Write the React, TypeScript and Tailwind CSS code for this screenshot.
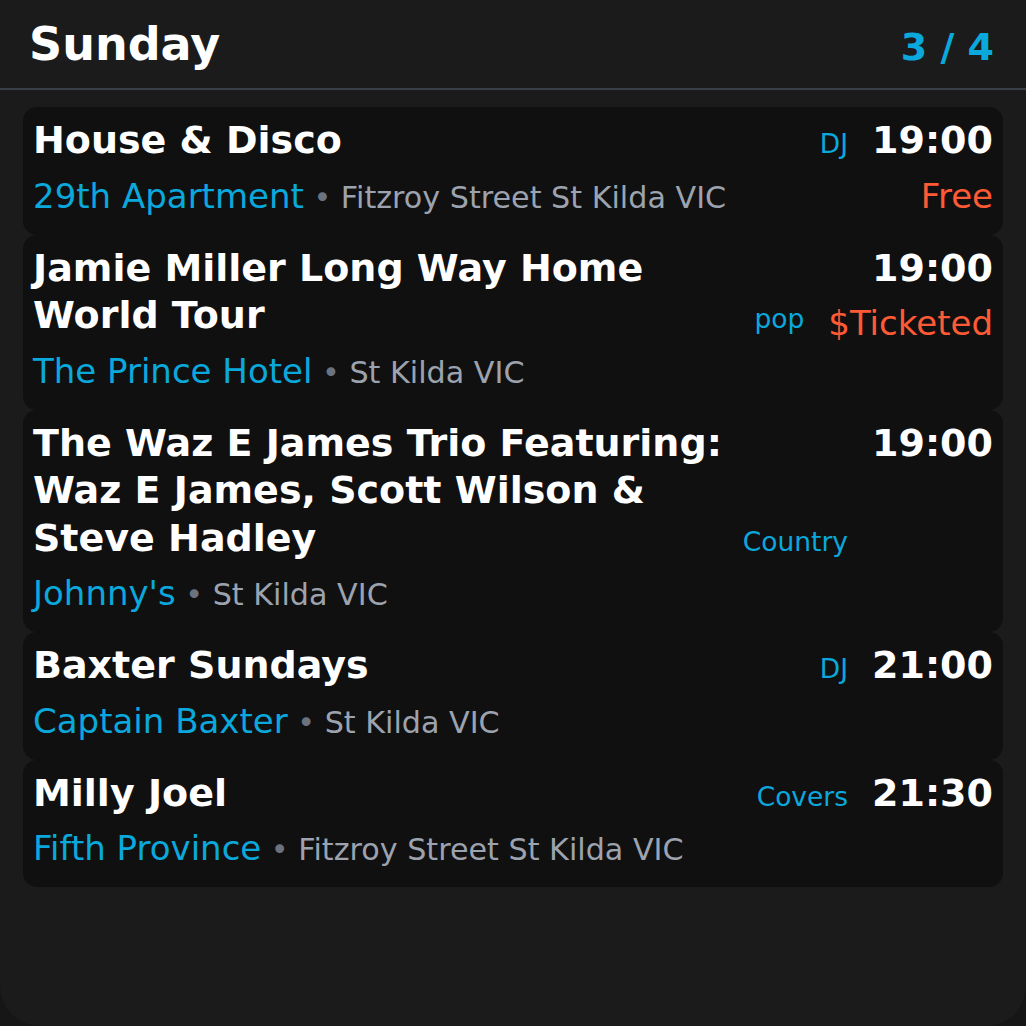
import React from 'react';

type Gig = {
  id: number;
  title: string;
  venue: string;
  address: string;
  genre?: string;
  time: string;
  price?: string;
};

const gigs: Gig[] = [
  { id: 1, title: 'House & Disco', venue: '29th Apartment', address: 'Fitzroy Street St Kilda VIC', genre: 'DJ', time: '19:00', price: 'Free' },
  { id: 2, title: 'Jamie Miller Long Way Home World Tour', venue: 'The Prince Hotel', address: 'St Kilda VIC', genre: 'pop', time: '19:00', price: '$Ticketed' },
  { id: 3, title: 'The Waz E James Trio Featuring: Waz E James, Scott Wilson & Steve Hadley', venue: "Johnny's", address: 'St Kilda VIC', genre: 'Country', time: '19:00' },
  { id: 4, title: 'Baxter Sundays', venue: 'Captain Baxter', address: 'St Kilda VIC', genre: 'DJ', time: '21:00' },
  { id: 5, title: 'Milly Joel', venue: 'Fifth Province', address: 'Fitzroy Street St Kilda VIC', genre: 'Covers', time: '21:30' },
];

const GigCard = ({ gig }: { gig: Gig }) => {
  return (
    <div className="flex gap-[24px] rounded-[14px] bg-[#101010] px-[10px] pt-[10px] pb-[12px]">
      <div className="flex min-w-0 flex-1 flex-col">
        <div className="flex gap-[12px] text-[38px] leading-[47.5px] [align-items:last_baseline]">
          <div className="min-w-0 flex-1 font-bold text-white">{gig.title}</div>
          {gig.genre && (
            <span className="shrink-0 text-[26.5px] leading-[30px] text-[#0aa8dc]">{gig.genre}</span>
          )}
        </div>
        <div className="mt-[6px] text-[34px] leading-[50px] whitespace-nowrap">
          <span className="text-[#0aa8dc]">{gig.venue}</span>
          <span className="text-[30.2px] text-[#6b7280]"> • </span>
          <span className="text-[30.2px] text-[#9ca3af]">{gig.address}</span>
        </div>
      </div>
      <div className="flex shrink-0 flex-col items-end">
        <div className="text-[38px] font-bold leading-[47.5px] text-white">{gig.time}</div>
        {gig.price && (
          <div className="mt-[6px] text-[34px] leading-[50px] text-[#ff5a36]">{gig.price}</div>
        )}
      </div>
    </div>
  );
};

const App = () => {
  return (
    <div className="h-[1026px] w-[1026px] bg-[#161616]" style={{ fontFamily: '"DejaVu Sans", "Liberation Sans", sans-serif' }}>
      <div className="flex h-full w-full flex-col rounded-b-[40px] bg-[#1b1b1b]">
        <div className="flex h-[90px] items-baseline justify-between border-b-2 border-[#3a3f4a] pt-[10px] pr-[32px] pl-[29px]">
          <span className="text-[46px] font-bold text-white">Sunday</span>
          <span className="text-[38px] font-bold text-[#0aa8dc]">3 / 4</span>
        </div>
        <div className="flex flex-col px-[23px] pt-[17px]">
          {gigs.map((gig) => (
            <GigCard key={gig.id} gig={gig} />
          ))}
        </div>
      </div>
    </div>
  );
};

export default App;
